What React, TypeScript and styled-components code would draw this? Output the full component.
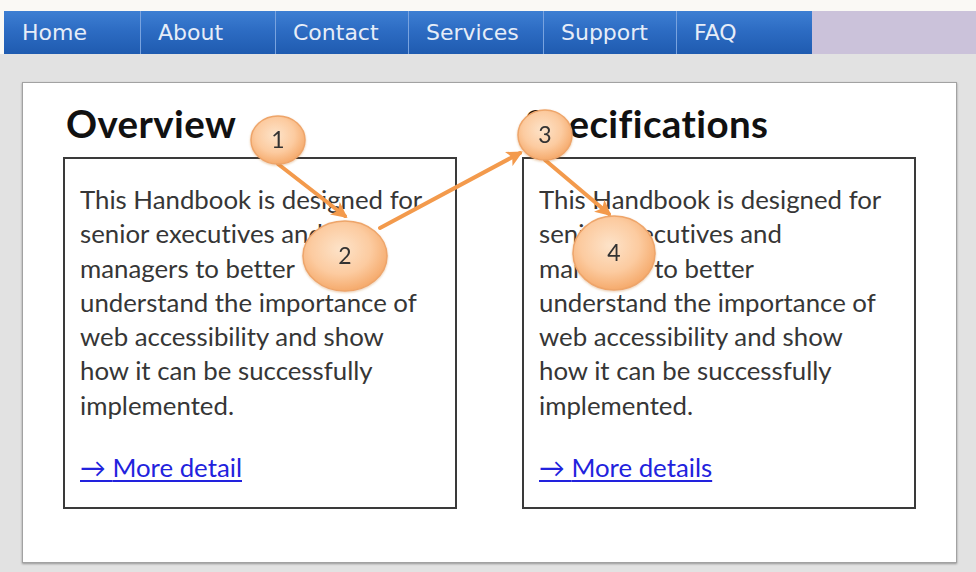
import React from "react";
import styled, { createGlobalStyle } from "styled-components";

const GlobalStyle = createGlobalStyle`
  html, body { margin: 0; padding: 0; }
  body {
    background: #e2e2e2;
    width: 976px;
    height: 572px;
    overflow: hidden;
    font-family: "Lato", "Open Sans", sans-serif;
  }
`;

const Page = styled.div`
  position: relative;
  width: 976px;
  height: 572px;
`;

const Header = styled.header`
  background: #faf9f5;
  padding: 11px 0 0 4px;
`;

const NavBar = styled.nav`
  display: flex;
  height: 43px;
`;

const NavItem = styled.a<{ $w: number; $first?: boolean }>`
  box-sizing: border-box;
  width: ${(p) => p.$w}px;
  padding-left: ${(p) => (p.$first ? 18 : 17)}px;
  border-left: ${(p) => (p.$first ? "none" : "1px solid #79a3df")};
  background: linear-gradient(#3d7fd3 0%, #2d6cc3 45%, #1f5bb0 100%);
  color: #e6edf8;
  font-family: "DejaVu Sans", "Verdana", sans-serif;
  font-size: 22px;
  line-height: 43px;
  text-decoration: none;
  white-space: nowrap;
`;

const NavFill = styled.div`
  flex: 1;
  background: #cbc2da;
`;

const Content = styled.main`
  padding: 28px 19px 0 22px;
`;

const Panel = styled.section`
  box-sizing: border-box;
  height: 481px;
  background: #ffffff;
  border: 1px solid #a2a2a2;
  box-shadow: 0 1px 2px rgba(0, 0, 0, 0.35);
  padding: 20px 40px 0 40px;
  display: grid;
  grid-template-columns: 394px 394px;
  column-gap: 65px;
`;

const Column = styled.div`
  display: flex;
  flex-direction: column;
`;

const Heading = styled.h2`
  margin: 0 0 14px 3px;
  font-family: "Lato", sans-serif;
  font-weight: 700;
  font-size: 38.5px;
  line-height: 40px;
  letter-spacing: 0.4px;
  color: #111111;
  font-variant-ligatures: none;
`;

const Box = styled.div`
  box-sizing: border-box;
  height: 352px;
  border: 2px solid #3a3a3a;
  padding: 23px 12px 0 15px;
`;

const BodyText = styled.p`
  margin: 0 0 28px 0;
  font-size: 25.8px;
  line-height: 34.3px;
  color: #363636;
  white-space: nowrap;
  font-variant-ligatures: none;
`;

const MoreLink = styled.a`
  font-size: 25.8px;
  line-height: 34.3px;
  color: #2222dd;
  text-decoration: underline;
  text-underline-offset: 3px;
  white-space: nowrap;
`;

const Overlay = styled.svg`
  position: absolute;
  left: 0;
  top: 0;
  pointer-events: none;
`;

const navItems = [
  { label: "Home", w: 136 },
  { label: "About", w: 135 },
  { label: "Contact", w: 133 },
  { label: "Services", w: 135 },
  { label: "Support", w: 133 },
  { label: "FAQ", w: 136 },
];

const columns = [
  { title: "Overview", link: "More detail" },
  { title: "Specifications", link: "More details" },
];

const lines = [
  "This Handbook is designed for",
  "senior executives and",
  "managers to better",
  "understand the importance of",
  "web accessibility and show",
  "how it can be successfully",
  "implemented.",
];

const markers = [
  { n: "1", cx: 278, cy: 140, rx: 27, ry: 24 },
  { n: "2", cx: 345, cy: 256, rx: 42, ry: 35 },
  { n: "3", cx: 545, cy: 135, rx: 27, ry: 25 },
  { n: "4", cx: 614, cy: 253, rx: 41, ry: 37 },
];

const arrows = [
  { x1: 278, y1: 164, x2: 345, y2: 216 },
  { x1: 380, y1: 228, x2: 520, y2: 153 },
  { x1: 545, y1: 160, x2: 609, y2: 214 },
];

export default function App() {
  return (
    <Page>
      <GlobalStyle />
      <Header>
        <NavBar>
          {navItems.map((it, i) => (
            <NavItem key={it.label} href="#" $w={it.w} $first={i === 0}>
              {it.label}
            </NavItem>
          ))}
          <NavFill />
        </NavBar>
      </Header>
      <Content>
        <Panel>
          {columns.map((c) => (
            <Column key={c.title}>
              <Heading>{c.title}</Heading>
              <Box>
                <BodyText>
                  {lines.map((l, i) => (
                    <React.Fragment key={i}>
                      {l}
                      {i < lines.length - 1 && <br />}
                    </React.Fragment>
                  ))}
                </BodyText>
                <MoreLink href="#">→ {c.link}</MoreLink>
              </Box>
            </Column>
          ))}
        </Panel>
      </Content>
      <Overlay width={976} height={572} viewBox="0 0 976 572">
        <defs>
          <radialGradient id="peach" cx="45%" cy="40%" r="65%">
            <stop offset="0%" stopColor="#fde3c9" />
            <stop offset="55%" stopColor="#fccba0" />
            <stop offset="100%" stopColor="#f4a462" />
          </radialGradient>
          <marker
            id="head"
            viewBox="0 0 10 10"
            refX="8"
            refY="5"
            markerWidth="4"
            markerHeight="4"
            orient="auto"
          >
            <path d="M0,0 L10,5 L0,10 L2.5,5 Z" fill="#f39a4c" />
          </marker>
          <filter id="soft" x="-20%" y="-20%" width="140%" height="140%">
            <feDropShadow dx="0" dy="1" stdDeviation="1.2" floodColor="#c06a20" floodOpacity="0.35" />
          </filter>
        </defs>
        {arrows.map((a, i) => (
          <line
            key={i}
            x1={a.x1}
            y1={a.y1}
            x2={a.x2}
            y2={a.y2}
            stroke="#f39a4c"
            strokeWidth={4}
            strokeLinecap="round"
            markerEnd="url(#head)"
          />
        ))}
        {markers.map((m) => (
          <g key={m.n} filter="url(#soft)">
            <ellipse
              cx={m.cx}
              cy={m.cy}
              rx={m.rx}
              ry={m.ry}
              fill="url(#peach)"
              stroke="#eea56a"
              strokeWidth={1.5}
            />
            <text
              x={m.cx}
              y={m.cy + 8}
              textAnchor="middle"
              fontFamily="Lato, sans-serif"
              fontSize={23}
              fill="#333333"
            >
              {m.n}
            </text>
          </g>
        ))}
      </Overlay>
    </Page>
  );
}
